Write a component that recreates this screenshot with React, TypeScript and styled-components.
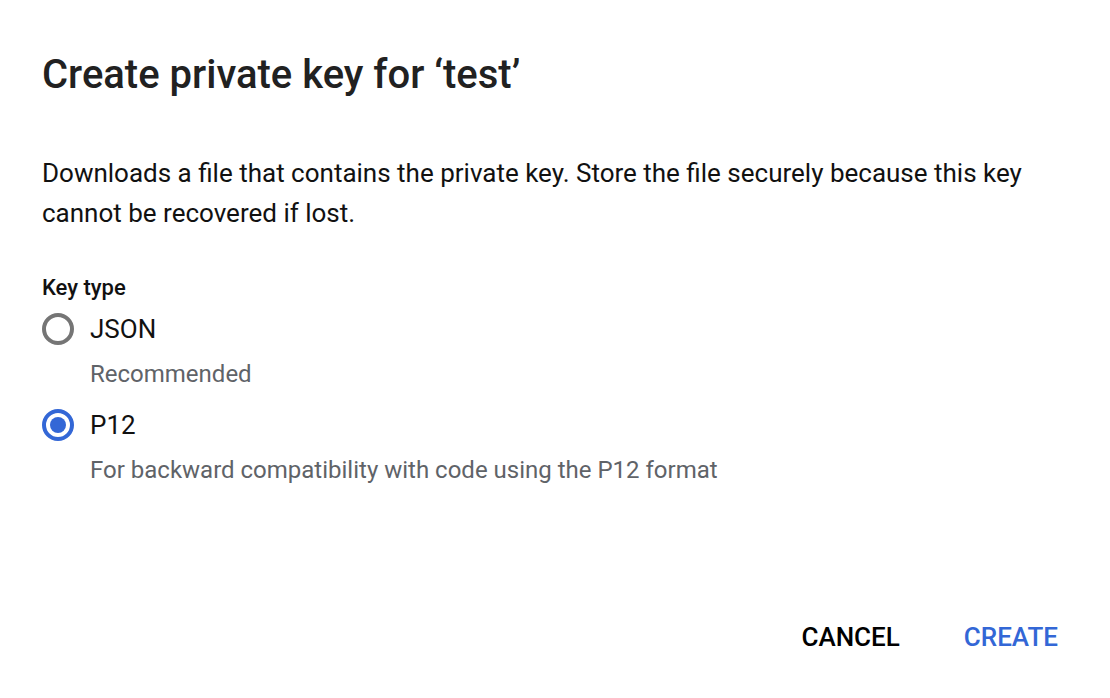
import React, { useState } from "react";
import styled, { createGlobalStyle } from "styled-components";

const Global = createGlobalStyle`
  html, body { margin: 0; padding: 0; background: #fff; }
  body { font-family: Roboto, "Liberation Sans", Arial, sans-serif; -webkit-font-smoothing: antialiased; }
`;

const Dialog = styled.div`
  width: 1110px;
  height: 698px;
  box-sizing: border-box;
  padding: 51px 42px 0 42px;
  display: flex;
  flex-direction: column;
  background: #fff;
`;

const Title = styled.h1`
  margin: 0;
  font-size: 40px;
  line-height: 48px;
  font-weight: 500;
  color: #212121;
`;

const Body = styled.p`
  margin: 54px 0 0 0;
  font-size: 26px;
  line-height: 40px;
  color: #111;
`;

const Label = styled.div`
  margin-top: 41px;
  font-size: 22px;
  line-height: 28px;
  font-weight: 500;
  color: #111;
`;

const Options = styled.div`
  display: flex;
  flex-direction: column;
  margin-top: 7px;
`;

const Option = styled.label`
  display: grid;
  grid-template-columns: 32px 1fr;
  column-gap: 16px;
  align-items: center;
  cursor: pointer;
`;

const Radio = styled.span<{ $checked: boolean }>`
  width: 32px;
  height: 32px;
  box-sizing: border-box;
  border-radius: 50%;
  border: 4px solid ${(p) => (p.$checked ? "#3367d6" : "#757575")};
  display: flex;
  align-items: center;
  justify-content: center;
  &::after {
    content: "";
    width: 16px;
    height: 16px;
    border-radius: 50%;
    background: ${(p) => (p.$checked ? "#3367d6" : "transparent")};
  }
`;

const OptionText = styled.span`
  font-size: 26px;
  line-height: 40px;
  color: #111;
`;

const Hint = styled.div`
  grid-column: 2;
  font-size: 24px;
  line-height: 32px;
  color: #5f6368;
  margin-top: 9px;
  margin-bottom: 15px;
`;

const Actions = styled.div`
  margin-top: auto;
  margin-bottom: 43px;
  display: flex;
  justify-content: flex-end;
  gap: 64px;
  padding-right: 10px;
`;

const Button = styled.button<{ $primary?: boolean }>`
  background: none;
  border: none;
  padding: 0;
  font-family: Roboto, "Liberation Sans", Arial, sans-serif;
  font-size: 26px;
  line-height: 36px;
  font-weight: 500;
  letter-spacing: 0;
  color: ${(p) => (p.$primary ? "#3367d6" : "#000")};
  cursor: pointer;
`;

const options = [
  { id: "json", label: "JSON", hint: "Recommended" },
  { id: "p12", label: "P12", hint: "For backward compatibility with code using the P12 format" },
];

export default function App() {
  const [sel, setSel] = useState("p12");
  return (
    <>
      <Global />
      <Dialog>
        <Title>Create private key for ‘test’</Title>
        <Body>
          Downloads a file that contains the private key. Store the file securely because this key
          cannot be recovered if lost.
        </Body>
        <Label>Key type</Label>
        <Options>
          {options.map((o) => (
            <Option key={o.id} onClick={() => setSel(o.id)}>
              <Radio $checked={sel === o.id} />
              <OptionText>{o.label}</OptionText>
              <Hint>{o.hint}</Hint>
            </Option>
          ))}
        </Options>
        <Actions>
          <Button>CANCEL</Button>
          <Button $primary>CREATE</Button>
        </Actions>
      </Dialog>
    </>
  );
}
